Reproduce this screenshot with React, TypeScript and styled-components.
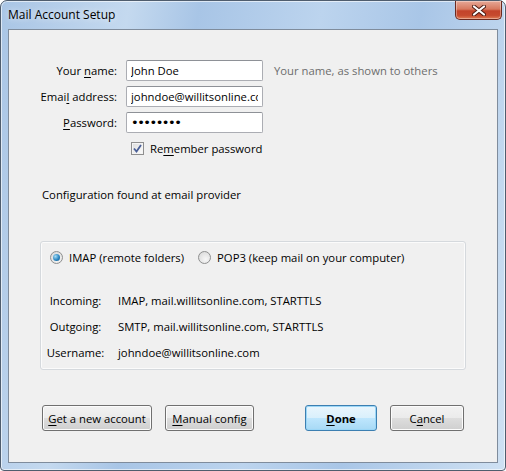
import React from 'react'
import styled, { createGlobalStyle } from 'styled-components'

const GlobalStyle = createGlobalStyle`
  html, body {
    margin: 0;
    padding: 0;
  }
  body {
    width: 506px;
    height: 471px;
    overflow: hidden;
    font-family: "Open Sans", "Noto Sans", sans-serif;
    font-size: 11.3px;
    color: #000;
  }
`;

const Window = styled.div`
  box-sizing: border-box;
  width: 506px;
  height: 471px;
  display: flex;
  flex-direction: column;
  border: 1px solid #4f5d6e;
  border-radius: 7px 7px 4px 4px;
  background: linear-gradient(100deg, #a9c5e5 0%, #c4d9ef 22%, #a8c5e6 34%, #bcd4ee 55%, #a9c6e7 72%, #cfe1f3 100%);
  box-shadow: inset 0 0 0 1px rgba(255, 255, 255, 0.6);
`;

const TitleBar = styled.div`
  height: 28px;
  display: flex;
  justify-content: space-between;
  align-items: flex-start;
  padding-left: 7px;
`;

const Title = styled.span`
  font-size: 12px;
  line-height: 28px;
  color: #000;
  text-shadow: 0 0 6px rgba(255, 255, 255, 0.9);
`;

const CloseButton = styled.div`
  width: 47px;
  height: 19px;
  margin-right: 3px;
  box-sizing: border-box;
  border: 1px solid #6b2a20;
  border-top: none;
  border-radius: 0 0 5px 5px;
  background: linear-gradient(#e6a897 0%, #d7795f 45%, #c3432a 55%, #c64a2e 80%, #e07d55 100%);
  box-shadow: inset 0 0 0 1px rgba(255, 255, 255, 0.35);
  display: flex;
  align-items: center;
  justify-content: center;
`;

const Client = styled.div`
  flex: 1;
  margin: 0 7px 7px 7px;
  border: 1px solid #7f8c9c;
  background: #f0f0f0;
  display: flex;
  flex-direction: column;
`;

const Form = styled.div`
  display: grid;
  grid-template-columns: 108px 137px auto;
  grid-auto-rows: 21px;
  column-gap: 9px;
  row-gap: 5px;
  padding-top: 30px;
  align-items: center;
`;

const Label = styled.label`
  text-align: right;
  white-space: nowrap;
`;

const Input = styled.input`
  box-sizing: border-box;
  width: 137px;
  height: 21px;
  border: 1px solid #abadb3;
  border-top-color: #8e9197;
  border-radius: 2px;
  background: #fff;
  padding: 0 4px;
  font-family: inherit;
  font-size: 11.3px;
  color: #000;
  outline: none;

  &[type='password'] {
    font-family: "DejaVu Sans", sans-serif;
    font-size: 13px;
    letter-spacing: -1.5px;
  }
`;

const Hint = styled.span`
  color: #6d6d6d;
  margin-left: 2px;
  white-space: nowrap;
`;

const CheckRow = styled.div`
  grid-column: 2 / 4;
  display: flex;
  align-items: center;
  gap: 6px;
  padding-left: 5px;
  height: 22px;
`;

const CheckBox = styled.span`
  box-sizing: border-box;
  width: 13px;
  height: 13px;
  border: 1px solid #8f8f8f;
  background: linear-gradient(135deg, #dcdcdc, #fdfdfd);
  box-shadow: inset 0 0 0 1px #f4f4f4;
  display: flex;
  align-items: center;
  justify-content: center;
`;

const Status = styled.div`
  margin-top: 28px;
  padding-left: 33px;
  line-height: 16px;
`;

const Group = styled.div`
  box-sizing: border-box;
  margin: 38px 0 0 31px;
  width: 426px;
  height: 129px;
  border: 1px solid #d5d9dd;
  border-radius: 3px;
  box-shadow: inset 0 0 0 1px #fbfbfb;
  padding: 7px 0 0 9px;
`;

const RadioRow = styled.div`
  display: flex;
  align-items: center;
  height: 16px;
  gap: 14px;
`;

const RadioOption = styled.label`
  display: flex;
  align-items: center;
  gap: 6px;
  white-space: nowrap;
`;

const Radio = styled.span<{ $checked?: boolean }>`
  box-sizing: border-box;
  width: 13px;
  height: 13px;
  border-radius: 50%;
  border: 1px solid #8e8f8f;
  background: radial-gradient(circle at 60% 65%, #f7f7f7, #d6d6d6);
  display: flex;
  align-items: center;
  justify-content: center;

  &::after {
    content: '';
    display: ${p => (p.$checked ? 'block' : 'none')};
    width: 7px;
    height: 7px;
    border-radius: 50%;
    background: radial-gradient(circle at 35% 35%, #a6dcf4 0%, #2a86c2 55%, #0f4f7d 100%);
  }
`;

const InfoGrid = styled.div`
  display: grid;
  grid-template-columns: 61px auto;
  grid-auto-rows: 16px;
  column-gap: 12px;
  row-gap: 10px;
  margin: 27px 0 0 -5px;
  align-items: center;
`;

const InfoLabel = styled.span`
  text-align: center;
  white-space: nowrap;
`;

const InfoValue = styled.span`
  white-space: nowrap;
`;

const ButtonBar = styled.div`
  display: flex;
  justify-content: space-between;
  margin-top: 35px;
  padding: 0 33px;
`;

const ButtonGroup = styled.div`
  display: flex;
  gap: 13px;
`;

const Button = styled.button<{ $w: number; $primary?: boolean }>`
  box-sizing: border-box;
  width: ${p => p.$w}px;
  height: 26px;
  border-radius: 3px;
  border: 1px solid ${p => (p.$primary ? '#3c7fb1' : '#707070')};
  background: ${p =>
    p.$primary
      ? 'linear-gradient(#eaf6fd 0%, #d9f0fc 50%, #bee6fd 51%, #a7d9f5 100%)'
      : 'linear-gradient(#f2f2f2 0%, #ebebeb 50%, #dddddd 51%, #cfcfcf 100%)'};
  box-shadow: inset 0 0 0 1px ${p => (p.$primary ? '#9cd7f7' : '#fcfcfc')};
  font-family: inherit;
  font-size: 11.3px;
  font-weight: ${p => (p.$primary ? 700 : 400)};
  color: #000;
  padding: 0;
`;

const Key = styled.u`
  text-decoration-thickness: 1px;
  text-underline-offset: 2px;
`;

const App = () => {
  return (
    <>
      <GlobalStyle />
      <Window>
        <TitleBar>
          <Title>Mail Account Setup</Title>
          <CloseButton>
            <svg width="14" height="11" viewBox="0 0 14 11">
              <path d="M2 1.5 L12 9.5 M12 1.5 L2 9.5" stroke="#4a1a12" strokeWidth="4" strokeLinecap="round" />
              <path d="M2 1.5 L12 9.5 M12 1.5 L2 9.5" stroke="#fff" strokeWidth="2.2" strokeLinecap="round" />
            </svg>
          </CloseButton>
        </TitleBar>
        <Client>
          <Form>
            <Label>Your <Key>n</Key>ame:</Label>
            <Input readOnly value="John Doe" />
            <Hint>Your name, as shown to others</Hint>

            <Label>Emai<Key>l</Key> address:</Label>
            <Input readOnly value="johndoe@willitsonline.com" />
            <span />

            <Label><Key>P</Key>assword:</Label>
            <Input readOnly type="password" value="password" />
            <span />

            <span />
            <CheckRow>
              <CheckBox>
                <svg width="9" height="9" viewBox="0 0 9 9">
                  <path d="M1 4.5 L3.5 7.5 L8 1" fill="none" stroke="#4a5f97" strokeWidth="1.8" />
                </svg>
              </CheckBox>
              <span>Re<Key>m</Key>ember password</span>
            </CheckRow>
          </Form>

          <Status>Configuration found at email provider</Status>

          <Group>
            <RadioRow>
              <RadioOption>
                <Radio $checked />
                IMAP (remote folders)
              </RadioOption>
              <RadioOption>
                <Radio />
                POP3 (keep mail on your computer)
              </RadioOption>
            </RadioRow>
            <InfoGrid>
              <InfoLabel>Incoming:</InfoLabel>
              <InfoValue>IMAP, mail.willitsonline.com, STARTTLS</InfoValue>
              <InfoLabel>Outgoing:</InfoLabel>
              <InfoValue>SMTP, mail.willitsonline.com, STARTTLS</InfoValue>
              <InfoLabel>Username:</InfoLabel>
              <InfoValue>johndoe@willitsonline.com</InfoValue>
            </InfoGrid>
          </Group>

          <ButtonBar>
            <ButtonGroup>
              <Button $w={110}><Key>G</Key>et a new account</Button>
              <Button $w={89}><Key>M</Key>anual config</Button>
            </ButtonGroup>
            <ButtonGroup>
              <Button $w={72} $primary><Key>D</Key>one</Button>
              <Button $w={74}>C<Key>a</Key>ncel</Button>
            </ButtonGroup>
          </ButtonBar>
        </Client>
      </Window>
    </>
  )
}

export default App
